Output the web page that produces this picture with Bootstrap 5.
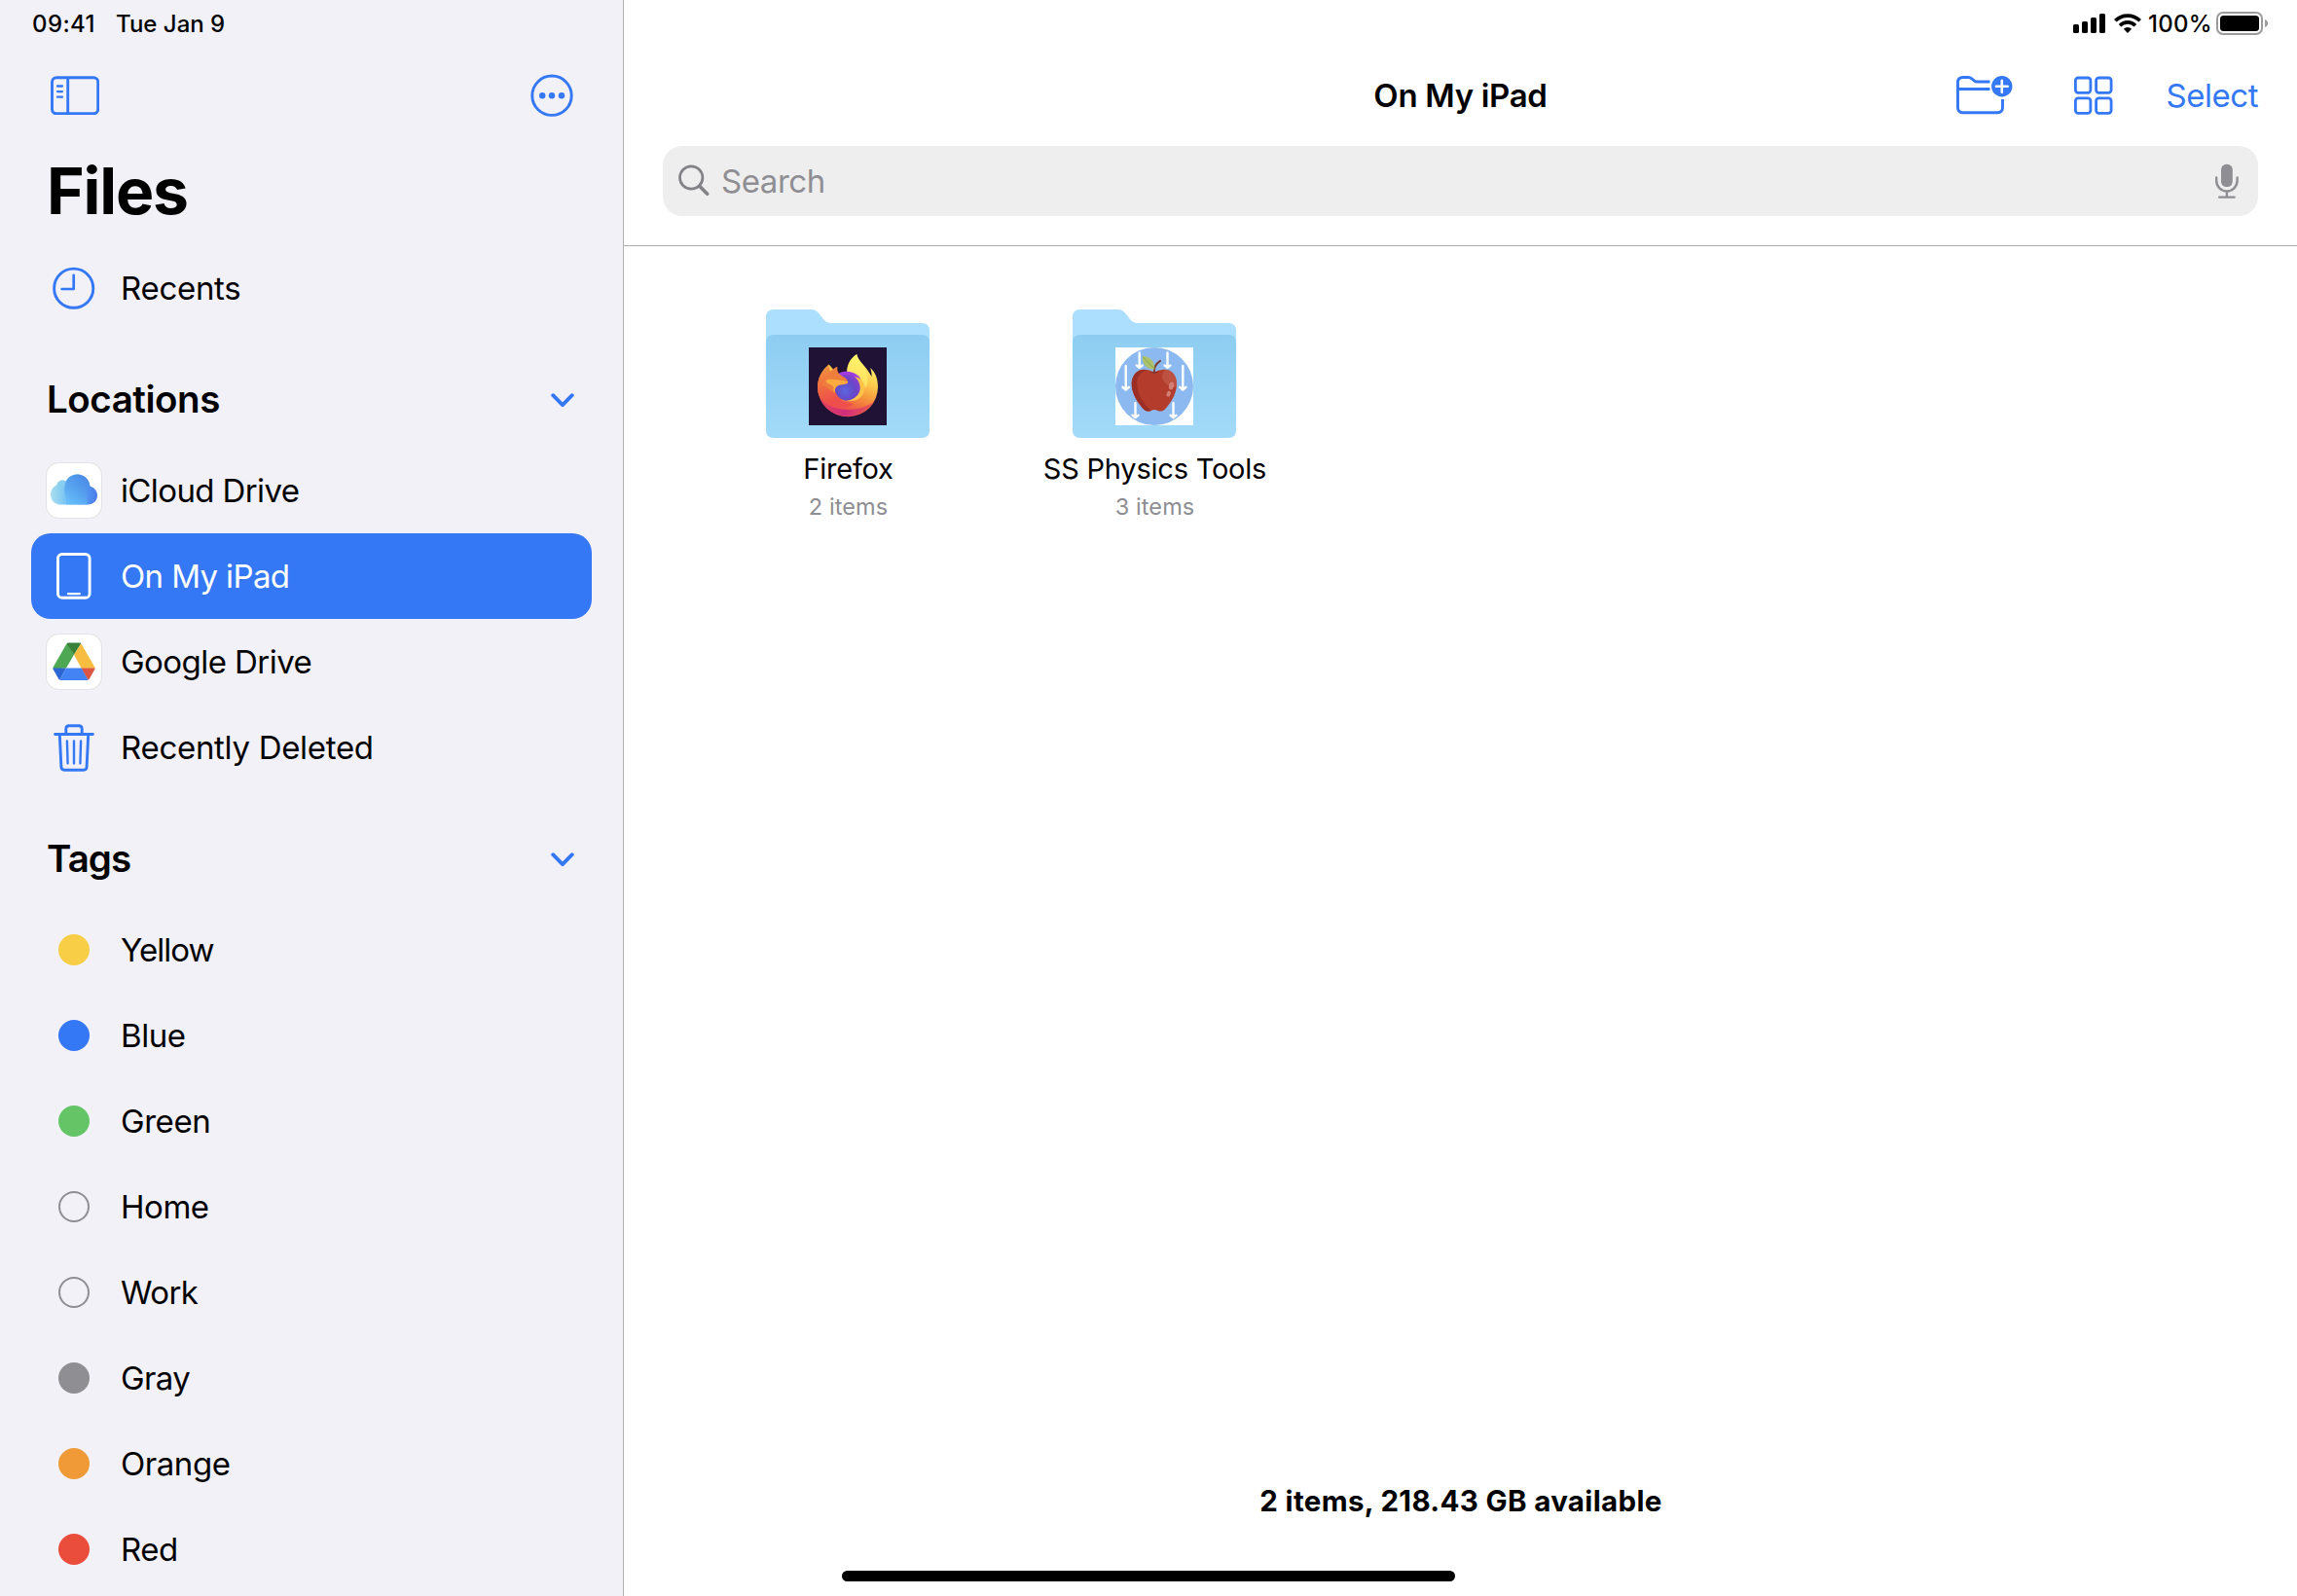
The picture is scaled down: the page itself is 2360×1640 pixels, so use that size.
<!DOCTYPE html>
<html lang="en">
<head>
<meta charset="utf-8">
<meta name="viewport" content="width=device-width, initial-scale=1">
<title>Files</title>
<link href="https://cdn.jsdelivr.net/npm/bootstrap@5.3.0/dist/css/bootstrap.min.css" rel="stylesheet">
<style>
  :root { --ios-blue: #3478f6; --ios-gray: #8e8e93; }
  body { font-family: Inter, "Liberation Sans", sans-serif; font-size: 33px; line-height: 40px; letter-spacing: -.45px; color: #000; background: #fff; }
  svg { display: block; flex: none; }
  .blue { color: var(--ios-blue); }
  .sidebar { width: 641px; background: #f2f1f7; border-right: 1px solid #b0b0b3; }
  .status { height: 48px; font-size: 24px; font-weight: 500; line-height: 49px; letter-spacing: 0; }
  .status .clock { width: 86px; letter-spacing: .4px; }
  .status-left { padding: 0 32px 0 33px; }
  .status-right { padding-right: 29px; }
  .percent { margin: 0 4px 0 7px; letter-spacing: .3px; }
  .tools { height: 100px; }
  .sidebar .tools { padding: 0 51px 0 52px; }
  .page-title { height: 96px; margin: 0 0 8px; padding-left: 48px; font-size: 66px; font-weight: 700; line-height: 96px; letter-spacing: -1.2px; }
  .place { --bs-list-group-bg: transparent; height: 88px; padding: 0 16px; gap: 20px; border: 0; color: #000; background: transparent; }
  .places { padding: 0 32px; }
  .places .place.active { background: var(--ios-blue); border-radius: 20px; color: #fff; margin: 0; }
  .slot { width: 56px; }
  .tile { width: 56px; height: 56px; border-radius: 13px; background: #fff; box-shadow: 0 0 0 1px #e3e3e6; }
  .dot { width: 32px; height: 32px; }
  .dot-open { border: 2px solid var(--ios-gray); }
  .section-head { height: 120px; padding: 20px 50px 0 48px; margin: 0; font-size: 38.5px; font-weight: 600; letter-spacing: -.45px; }
  .chevron { margin-top: 3px; }
  .tight { letter-spacing: -.62px; }
  .tighter { letter-spacing: -.95px; }
  .loose { letter-spacing: -.3px; }
  .nav-side { flex: 1 1 0; }
  .nav-title { font-weight: 600; letter-spacing: -.32px; font-size: 33px; }
  .top-bar { height: 253px; border-bottom: 1px solid #b0b0b2; }
  .grid-icon { margin-left: 63px; }
  .select { padding-right: 40px; margin-left: 54px; letter-spacing: -.45px; }
  .search { height: 72px; margin: 2px 40px 0; padding: 0 20px 0 16px; border-radius: 20px; background: #eee; color: var(--ios-gray); }
  .search-text { margin-left: 11px; }
  .folders { padding: 65px 0 0 73px; }
  .folder-cell { width: 315px; }
  .folder-name { margin-top: 12px; font-size: 29px; letter-spacing: -.22px; }
  .folder-count { font-size: 23.5px; line-height: 37px; letter-spacing: .1px; color: var(--ios-gray); }
  .folder-cell svg { margin-left: -1px; }
  .summary { font-size: 29.5px; font-weight: 650; letter-spacing: .34px; margin-bottom: 51px; padding-bottom: 27px; padding-left: 1px; box-sizing: content-box; }
  .home-bar { width: 630px; height: 11px; background: #000; left: 865px; bottom: 15px; }
</style>
<script src="https://cdn.jsdelivr.net/npm/bootstrap@5.3.0/dist/js/bootstrap.bundle.min.js"></script>
</head>
<body class="overflow-hidden">
<div class="d-flex vh-100 position-relative">

  <aside class="sidebar flex-shrink-0 d-flex flex-column overflow-hidden">
    <div class="status status-left d-flex"><span class="clock">09:41</span><span>Tue Jan 9</span></div>
    <div class="tools d-flex align-items-center justify-content-between flex-shrink-0 blue">
      <svg width="50" height="40" viewBox="0 0 50 40" fill="none" stroke="currentColor" stroke-width="2.900"><rect x="1.500" y="1.800" width="47.200" height="37" rx="4.500"/><path d="M17.700 1.500v37"/><path d="M7 10.500h5M7 16.100h5M7 21.700h5" stroke-width="2.300" stroke-linecap="round"/></svg>
      <svg width="44" height="44" viewBox="0 0 44 44"><circle cx="22" cy="22.200" r="20.200" fill="none" stroke="currentColor" stroke-width="2.900"/><g fill="currentColor"><circle cx="12.200" cy="22.200" r="3.200"/><circle cx="22" cy="22.200" r="3.200"/><circle cx="32" cy="22.200" r="3.200"/></g></svg>
    </div>
    <h1 class="page-title">Files</h1>

    <div class="list-group places">
      <a class="list-group-item place d-flex align-items-center"><span class="slot d-flex justify-content-center blue"><svg width="44" height="44" viewBox="0 0 44 44" fill="none" stroke="currentColor" stroke-linecap="round" stroke-linejoin="round"><circle cx="21.700" cy="22.200" r="20.100" stroke-width="2.900"/><path d="M21.700 8.800v14.200H9.600" stroke-width="2.700"/></svg></span><span class="loose">Recents</span></a>
    </div>

    <h2 class="section-head d-flex align-items-center justify-content-between">Locations
      <svg class="blue chevron" width="24" height="15" viewBox="0 0 24 15" fill="none" stroke="currentColor" stroke-width="3.800" stroke-linecap="round" stroke-linejoin="round"><path d="M2.200 2.200l9.800 10 9.800-10"/></svg></h2>
    <div class="list-group places">
      <a class="list-group-item place d-flex align-items-center"><span class="slot tile">
        <svg width="56" height="56" viewBox="0 0 56 56"><defs>
          <linearGradient id="cl" x1="0" y1="0" x2="1" y2="0"><stop offset="0" stop-color="#a9e0ee"/><stop offset=".5" stop-color="#5fb5f6"/><stop offset="1" stop-color="#4a7bea"/></linearGradient>
          <linearGradient id="cb" x1=".7" y1="0" x2=".35" y2="1"><stop offset="0" stop-color="#4587e4"/><stop offset=".5" stop-color="#549cec"/><stop offset="1" stop-color="#64bdfb"/></linearGradient></defs>
          <path fill="url(#cl)" d="M15 42.500C8.500 42.500 4 38 4 32.400C4 27.400 6.800 23.900 10.300 22.600C10.600 19.500 13.300 17.500 16.500 17.500C17.700 17.500 18.900 17.900 19.700 18.400C22 14 26.400 11.500 31.500 11.500C38.500 11.500 43.500 16.500 44.500 23.800C49 25 52 28.700 52 33.100C52 38.500 48 42.500 42.500 42.500Z"/>
          <path fill="url(#cb)" opacity=".75" d="M20 42.500C20 38 20 35 18.500 31.500C17 24 19.500 12 31.500 11.500C38.500 11.500 44 16.500 44.500 24C41 28 40.500 34 42 42.500Z"/>
          <path fill="#8fd3ee" opacity=".5" d="M10.300 22.600C14.500 21.600 18.500 24 19.200 28.500C17.700 25 18.200 21 19.700 18.400C15.500 15.800 10.600 19 10.300 22.600Z"/></svg></span><span class="tight">iCloud Drive</span></a>
      <a class="list-group-item place active d-flex align-items-center"><span class="slot d-flex justify-content-center"><svg width="36" height="48" viewBox="0 0 36 48" fill="none" stroke="currentColor"><rect x="1.500" y="1.500" width="32.600" height="44.800" rx="4.300" stroke-width="2.900"/><path d="M12 42.200h11.800" stroke-width="2.300" stroke-linecap="round"/></svg></span><span class="tight">On My iPad</span></a>
      <a class="list-group-item place d-flex align-items-center"><span class="slot tile">
        <svg width="56" height="56" viewBox="0 0 56 56">
          <path fill="#4ea853" d="M20.600 9.200L6.800 33.200Q6.200 34.500 6.900 35.500L20 34.500L28 20.800L21.500 9Z"/>
          <path fill="#398039" d="M20.600 9.200Q21.200 8.500 22 8.500H34Q34.900 8.500 35.300 9.200L28 20.800Z"/>
          <path fill="#f6bd41" d="M35.300 9.200L49.200 33.200Q49.700 34 49.500 34.700H35.700L28 20.800Z"/>
          <path fill="#2b66d2" d="M6.400 34.500H20L13.500 46.600Q12.800 46.500 12.300 45.700L6.800 36Q6.400 35.300 6.400 34.500Z"/>
          <path fill="#4483f3" d="M20 34.500H36L42.600 46.600Q42.200 47 41.500 47H14.500Q13.800 47 13.400 46.600Z"/>
          <path fill="#dc5442" d="M35.700 34.500H49.600Q49.600 35.300 49.200 36L43.700 45.700Q43.200 46.500 42.500 46.600Z"/></svg></span><span style="letter-spacing:-.55px">Google Drive</span></a>
      <a class="list-group-item place d-flex align-items-center"><span class="slot d-flex justify-content-center blue"><svg width="42" height="50" viewBox="0 0 42 50" fill="none" stroke="currentColor" stroke-width="2.900" stroke-linecap="round" stroke-linejoin="round"><path d="M1.600 11.500h38.800M12.800 11V6q0-3.200 3.200-3.200h10q3.200 0 3.200 3.200v5M6.300 12l1.600 33q.2 3.200 3.300 3.200h19.600q3.100 0 3.300-3.200l1.600-33"/><path d="M13.900 18.500l.7 23M21 18.500v23M28.100 18.500l-.7 23" stroke-width="2.400"/></svg></span><span class="loose">Recently Deleted</span></a>
    </div>

    <h2 class="section-head d-flex align-items-center justify-content-between"><span class="tighter">Tags</span>
      <svg class="blue chevron" width="24" height="15" viewBox="0 0 24 15" fill="none" stroke="currentColor" stroke-width="3.800" stroke-linecap="round" stroke-linejoin="round"><path d="M2.200 2.200l9.800 10 9.800-10"/></svg></h2>
    <div class="list-group places">
      <a class="list-group-item place d-flex align-items-center"><span class="slot d-flex justify-content-center"><i class="dot rounded-circle" style="background:#f7ce46"></i></span><span class="tighter">Yellow</span></a>
      <a class="list-group-item place d-flex align-items-center"><span class="slot d-flex justify-content-center"><i class="dot rounded-circle" style="background:#3478f6"></i></span>Blue</a>
      <a class="list-group-item place d-flex align-items-center"><span class="slot d-flex justify-content-center"><i class="dot rounded-circle" style="background:#65c466"></i></span>Green</a>
      <a class="list-group-item place d-flex align-items-center"><span class="slot d-flex justify-content-center"><i class="dot dot-open rounded-circle"></i></span>Home</a>
      <a class="list-group-item place d-flex align-items-center"><span class="slot d-flex justify-content-center"><i class="dot dot-open rounded-circle"></i></span><span class="tight">Work</span></a>
      <a class="list-group-item place d-flex align-items-center"><span class="slot d-flex justify-content-center"><i class="dot rounded-circle" style="background:#8e8e93"></i></span><span class="tight">Gray</span></a>
      <a class="list-group-item place d-flex align-items-center"><span class="slot d-flex justify-content-center"><i class="dot rounded-circle" style="background:#f09a37"></i></span>Orange</a>
      <a class="list-group-item place d-flex align-items-center"><span class="slot d-flex justify-content-center"><i class="dot rounded-circle" style="background:#eb4d3d"></i></span>Red</a>
    </div>
  </aside>

  <main class="flex-grow-1 d-flex flex-column">
    <header class="top-bar flex-shrink-0">
      <div class="status status-right d-flex justify-content-end align-items-center">
        <svg width="34" height="20" viewBox="0 0 34 20"><rect x="0" y="11" width="6" height="9" rx="1.600"/><rect x="9" y="8" width="6" height="12" rx="1.600"/><rect x="18" y="4" width="6" height="16" rx="1.600"/><rect x="27" y="0" width="6" height="20" rx="1.600"/></svg>
        <svg class="ms-2" width="28" height="20" viewBox="0 0 28 20" fill="none" stroke="#000" stroke-width="3.700"><path d="M1.300 7.300a18 18 0 0 1 25.400 0"/><path d="M6.100 12.200a11.200 11.200 0 0 1 15.800 0"/><path d="M9.900 15.800a5.800 5.800 0 0 1 8.200 0L14 20z" fill="#000" stroke="none"/></svg>
        <span class="percent">100%</span>
        <svg width="54" height="24" viewBox="0 0 54 24"><rect x="1" y="1" width="46" height="22" rx="6" fill="none" stroke="#9b9b9b" stroke-width="2"/><rect x="4" y="4" width="40" height="16" rx="3.500"/><path d="M50 8q3 1.200 3 4t-3 4z" fill="#9b9b9b"/></svg>
      </div>
      <div class="tools d-flex align-items-center">
        <div class="nav-side"></div>
        <div class="nav-title">On My iPad</div>
        <div class="nav-side d-flex align-items-center justify-content-end blue">
          <svg width="58" height="42" viewBox="0 0 58 42" fill="none" stroke="currentColor" stroke-width="2.900"><path d="M34.500 7H21.500q-1.800 0-3.200-1.200l-2.700-2.100q-1.400-1.200-3.200-1.200H6.700q-5.200 0-5.200 5.200v25.800q0 5.200 5.200 5.200h35.600q5.200 0 5.200-5.200V25M1.500 14.500h33"/><circle cx="46.800" cy="11.800" r="10.700" fill="currentColor" stroke="none"/><path d="M46.800 5.900v11.800M40.900 11.800h11.800" stroke="#fff" stroke-width="2.600" stroke-linecap="round"/></svg>
          <svg class="grid-icon" width="40" height="40" viewBox="0 0 40 40" fill="none" stroke="currentColor" stroke-width="2.800"><rect x="1.400" y="2" width="15.500" height="15.400" rx="2.800"/><rect x="22.600" y="2" width="15.500" height="15.400" rx="2.800"/><rect x="1.400" y="22.900" width="15.500" height="15.400" rx="2.800"/><rect x="22.600" y="22.900" width="15.500" height="15.400" rx="2.800"/></svg>
          <span class="select">Select</span>
        </div>
      </div>
      <div class="search d-flex align-items-center">
        <svg width="33" height="34" viewBox="0 0 33 34" fill="none" stroke="#828287" stroke-linecap="round"><circle cx="13.200" cy="13.500" r="11.700" stroke-width="2.700"/><path d="M22 22.500l7.700 7.700" stroke-width="3.600"/></svg>
        <span class="flex-grow-1 search-text">Search</span>
        <svg width="24" height="36" viewBox="0 0 24 36" fill="none" stroke="#8e8e93" stroke-width="2.400" stroke-linecap="round"><rect x="6" y=".8" width="11.800" height="23.200" rx="5.500" fill="#8e8e93" stroke="none"/><path d="M1.200 14.500v3.300a10.700 10.700 0 0 0 21.400 0v-3.300M11.900 28.700v5.500M4.200 34.600h15.400"/></svg>
      </div>
    </header>

    <section class="folders d-flex flex-grow-1 align-items-start text-center">
      <div class="folder-cell d-flex flex-column align-items-center">
        <svg width="168" height="132" viewBox="0 0 168 132"><defs>
          <linearGradient id="fb" x1="0" y1="0" x2="0" y2="1"><stop offset="0" stop-color="#8ecdf1"/><stop offset="1" stop-color="#a3daf9"/></linearGradient>
          <linearGradient id="ff" x1=".75" y1=".05" x2=".35" y2="1"><stop offset=".05" stop-color="#fff56c"/><stop offset=".35" stop-color="#fcc74a"/><stop offset=".62" stop-color="#f48a3c"/><stop offset=".85" stop-color="#ef514b"/><stop offset="1" stop-color="#e5405f"/></linearGradient>
          <linearGradient id="fe" x1=".2" y1="0" x2=".5" y2="1"><stop offset="0" stop-color="#f2973c"/><stop offset=".4" stop-color="#f0703f"/><stop offset=".85" stop-color="#ee4f4c"/></linearGradient>
          <linearGradient id="fm" x1="0" y1="0" x2="1" y2="0"><stop offset="0" stop-color="#e5405f"/><stop offset=".45" stop-color="#cf2f7c"/><stop offset="1" stop-color="#ee5a4c"/></linearGradient>
          <radialGradient id="gl" cx=".4" cy=".62" r=".65"><stop offset="0" stop-color="#5c66e0"/><stop offset=".6" stop-color="#6648c6"/><stop offset="1" stop-color="#8b3ed0"/></radialGradient></defs>
          <path fill="#abdffd" d="M8 0H46C50 0 52.500 1.500 55 4.800L59 10C61.500 13 64 14 68 14H160Q168 14 168 22V60H0V8Q0 0 8 0Z"/>
          <path fill="url(#fb)" d="M8 26H160Q168 26 168 34V124Q168 132 160 132H8Q0 132 0 124V34Q0 26 8 26Z"/>
          <g transform="translate(44 39)">
            <rect width="80" height="80" fill="#1f1235"/>
            <path fill="url(#ff)" d="M39 26C39.500 17.500 43 11 49.300 7C50.500 14 59 19 64.500 30C64.800 27 64.300 24 63 21C68.500 25 71 33 71 40.500A31 30.500 0 0 1 9 41C9 31 14 23 20.700 17.500L30 28Z"/>
            <path fill="url(#fm)" d="M12.500 54C25 66 50 68 67 55.500C55 75.500 23 76 12.500 54Z"/>
            <path fill="url(#fe)" d="M20.700 17.500C20.500 20.500 21.300 23 22.500 24.800L30 30L27 46L34 55L46 58C40 64 22 63 11.500 51.500C9.500 48 9 44 9 41C9 31 14 23 20.700 17.500Z"/>
            <path fill="#a13de0" d="M29.800 27.500C34 23.600 44 23 51 28.500C54 31 54 36 52 41H30Z"/>
            <circle cx="39.900" cy="41.200" r="13.400" fill="url(#gl)"/>
            <path fill="#fcc348" d="M46.500 30C55 31 58.500 38 57 45C55 52 48 56.500 39 54.600C49 53.500 54 46 52.500 39.500C51.500 34.500 49.500 31.500 46.500 30Z"/>
            <path fill="#fff069" opacity=".7" d="M49.300 7C41.500 12 39.500 18 39.300 24.700C48 25 55 31 58.500 42C62 35 61 26 55 18.500C51 14.500 49.500 11 49.300 7Z"/>
            <path fill="#ef7e3c" d="M22 25C24.500 22.500 27 20.500 29.300 19.700C29 22.500 29.500 25.500 31.500 27.500C35 30.500 40 31.500 40.200 36C39 38 35.500 38 31.500 38.500C28 39.500 26.500 43 26.500 47L14 38Z"/>
            <path fill="#fbab40" d="M17.300 34C22 31.500 30 33.500 40.200 35.200C40 38 34.500 37.800 31 38.700C27.500 39.800 26 43 26.700 47C24.500 44.500 26 42 24.500 39.500C22.500 37.500 18.500 38 17.300 34Z"/>
          </g></svg>
        <div class="folder-name">Firefox</div>
        <div class="folder-count">2 items</div>
      </div>
      <div class="folder-cell d-flex flex-column align-items-center">
        <svg width="168" height="132" viewBox="0 0 168 132">
          <path fill="#abdffd" d="M8 0H46C50 0 52.500 1.500 55 4.800L59 10C61.500 13 64 14 68 14H160Q168 14 168 22V60H0V8Q0 0 8 0Z"/>
          <path fill="url(#fb)" d="M8 26H160Q168 26 168 34V124Q168 132 160 132H8Q0 132 0 124V34Q0 26 8 26Z"/>
          <g transform="translate(44 39)">
            <rect width="80" height="80" fill="#fff"/><circle cx="40" cy="40" r="40" fill="#8cbaf0"/>
            <g fill="none" stroke="#fff" stroke-width="2.400" stroke-linecap="round" stroke-linejoin="round">
              <path d="M10.700 19v24.500m-3.200-2.700l3.200 2.900 3.200-2.900M24.700 5.500v15.200m-3-2.300l3 2.500 3-2.500M53.500 5.500v15.200m-3-2.300l3 2.500 3-2.500M69.300 19v24.500m-3.200-2.700l3.200 2.900 3.200-2.900M20.500 57v15m-3-2.300l3 2.500 3-2.500M59.500 57v15m-3-2.300l3 2.500 3-2.500"/></g>
            <path fill="#b43c2c" d="M39.700 25.500C43 24 47 22.500 51.500 22.800C59 23.500 63 30 63 37.500C63 48 56 58 51 63.500C48.500 66 45.500 66 43 64.700Q40 63.400 37 64.700C34.500 66 31.500 66 29 63.500C24 58 16.700 48 16.700 37.500C16.700 30 21 23.500 28 22.800C32.500 22.500 36.500 24 39.700 25.500Z"/>
            <path fill="#9b2f26" d="M33 23.300C25 24.500 22 31 22.300 38C22.700 49 29 58 36.500 64.900C34 66 31.500 66 29 63.500C24 58 16.700 48 16.700 37.500C16.700 28 23 21.500 33 23.300Z"/>
            <path fill="#c25a4a" opacity=".75" d="M51.500 22.800C59 23.500 63 30 63 37.500Q62.900 39.500 62.500 41C56 41 49 37 48 30Q48 25 51.500 22.800Z"/>
            <ellipse cx="57.500" cy="39.500" rx="2.500" ry="4" fill="#d28076" transform="rotate(15 57.500 39.500)"/><ellipse cx="54.700" cy="47.800" rx="2" ry="3" fill="#d28076" transform="rotate(20 54.700 47.800)"/>
            <path d="M35.500 24.500Q40 28.500 45 24.500Q40 26 35.500 24.500Z" fill="#832a22"/>
            <path d="M39.800 26C39.600 20.500 42 16.500 46 13.900" fill="none" stroke="#7c4032" stroke-width="2" stroke-linecap="round"/>
            <path fill="#abc16c" d="M27.700 9C35 8.500 40.500 14 40.300 22.500C32.500 23 27 17 27.700 9Z"/><path d="M28.500 10L40 22" stroke="#8ea656" stroke-width="1"/>
          </g></svg>
        <div class="folder-name">SS Physics Tools</div>
        <div class="folder-count">3 items</div>
      </div>
    </section>

    <footer class="text-center"><div class="summary">2 items, 218.43 GB available</div></footer>
  </main>

  <div class="home-bar position-absolute rounded-pill"></div>
</div>
</body>
</html>
